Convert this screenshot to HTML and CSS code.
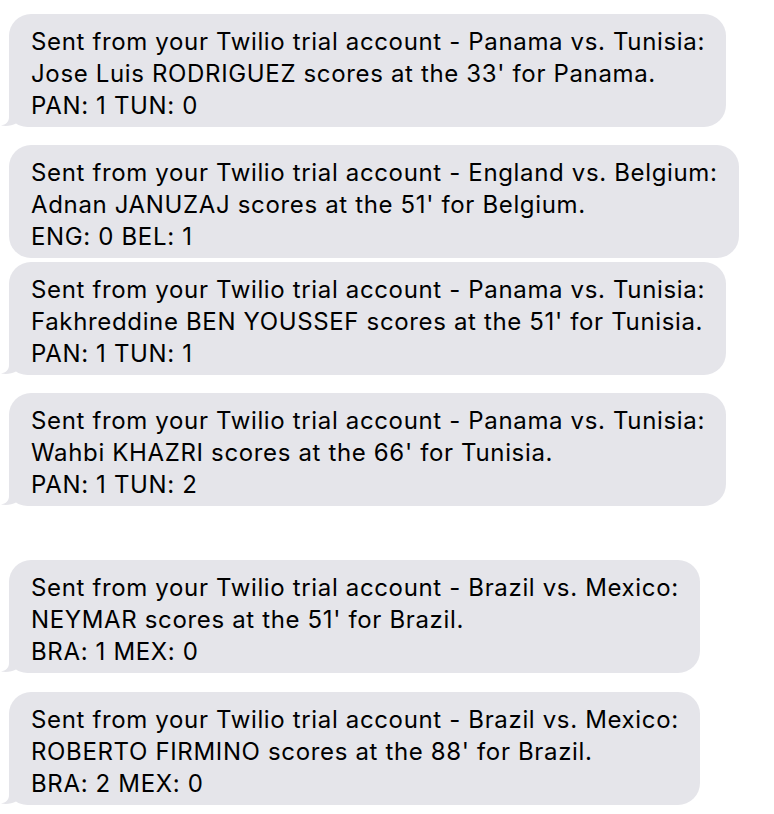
FILE: index.html
```html
<!DOCTYPE html>
<html>
<head>
<meta charset="utf-8">
<link rel="stylesheet" href="styles.css">
</head>
<body>
<div class="thread">
  <div class="bubble tail gap-after">Sent from your Twilio trial account - Panama vs. Tunisia:<br>Jose Luis RODRIGUEZ scores at the 33' for Panama.<br>PAN: 1 TUN: 0</div>
  <div class="bubble gap-small">Sent from your Twilio trial account - England vs. Belgium:<br>Adnan JANUZAJ scores at the 51' for Belgium.<br>ENG: 0 BEL: 1</div>
  <div class="bubble tail gap-after">Sent from your Twilio trial account - Panama vs. Tunisia:<br>Fakhreddine BEN YOUSSEF scores at the 51' for Tunisia.<br>PAN: 1 TUN: 1</div>
  <div class="bubble tail gap-large">Sent from your Twilio trial account - Panama vs. Tunisia:<br>Wahbi KHAZRI scores at the 66' for Tunisia.<br>PAN: 1 TUN: 2</div>
  <div class="bubble tail gap-last">Sent from your Twilio trial account - Brazil vs. Mexico:<br>NEYMAR scores at the 51' for Brazil.<br>BRA: 1 MEX: 0</div>
  <div class="bubble tail">Sent from your Twilio trial account - Brazil vs. Mexico:<br>ROBERTO FIRMINO scores at the 88' for Brazil.<br>BRA: 2 MEX: 0</div>
</div>
</body>
</html>
```
FILE: styles.css
```css
html, body {
  margin: 0;
  padding: 0;
  background: #ffffff;
}
.thread {
  display: flex;
  flex-direction: column;
  align-items: flex-start;
  padding: 14px 0 0 9px;
}
.bubble {
  position: relative;
  background: #e5e5ea;
  color: #000;
  font-family: Inter, "Liberation Sans", Arial, sans-serif;
  font-size: 24px;
  letter-spacing: 0.65px;
  line-height: 32px;
  padding: 12px 21px 5px 22px;
  height: 96px;
  border-radius: 22px;
  white-space: nowrap;
}
.gap-after { margin-bottom: 18px; }
.gap-small { margin-bottom: 4px; }
.gap-large { margin-bottom: 54px; }
.gap-last { margin-bottom: 19px; }
.tail::before {
  content: "";
  position: absolute;
  left: -8px;
  bottom: 0;
  width: 30px;
  height: 22px;
  background: #e5e5ea;
  clip-path: path("M 8 0 L 8 12 C 8 17 5 19.5 0 20.5 C 6 21.5 11 20.5 15 18.5 C 18 20.5 22 22 30 22 L 30 0 Z");
}
```
